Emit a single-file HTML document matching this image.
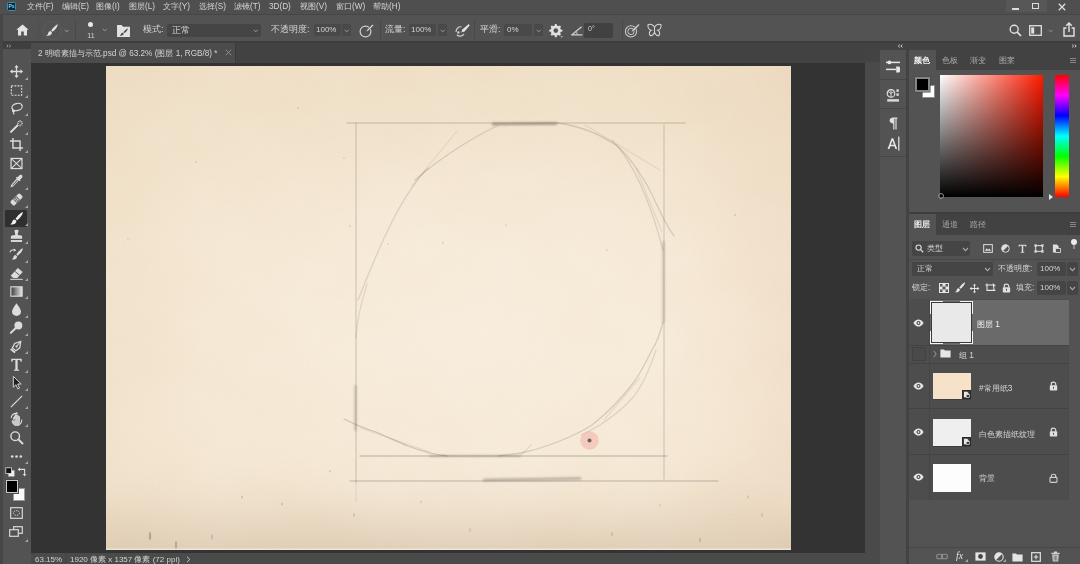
<!DOCTYPE html>
<html lang="zh">
<head>
<meta charset="utf-8">
<title>Photoshop</title>
<style>
*{box-sizing:border-box;margin:0;padding:0}
html,body{width:1080px;height:564px;overflow:hidden;background:#4f4f4f}
body{font-family:"Liberation Sans",sans-serif;font-size:9px;color:#d4d4d4;position:relative;-webkit-font-smoothing:antialiased;filter:blur(.6px)}
.abs{position:absolute}
.m{top:1px;font-size:8.2px}
.tri{position:absolute;width:0;height:0;border-left:3px solid transparent;border-bottom:3px solid #a6a6a6}
.t{position:absolute;white-space:nowrap;overflow:hidden;line-height:12px;height:12px}
#menubar{left:0;top:0;width:1080px;height:14px;background:#4f4f4f}
#optbar{left:0;top:14px;width:1080px;height:29px;background:#535353;border-top:1px solid #464646;border-bottom:2px solid #3d3d3d}
#tabbar{left:31px;top:43px;width:834px;height:20px;background:#424242}
#doctab{left:31px;top:43px;width:205px;height:20px;background:#4c4c4c;border-right:1px solid #3a3a3a}
#surround{left:31px;top:63px;width:834px;height:490px;background:#333333}
#status{left:31px;top:553px;width:834px;height:11px;background:#4a4a4a}
#toolbar{left:0;top:43px;width:31px;height:521px;background:#535353}
#toolhead{left:3px;top:43px;width:28px;height:6px;background:#3f3f3f}
#edge{left:0;top:14px;width:3px;height:550px;background:#464646}
#dock{left:865px;top:43px;width:215px;height:521px;background:#434343}
#vstrip{left:865px;top:62px;width:15px;height:502px;background:#4a4a4a}
#iconcol{left:880px;top:50px;width:26px;height:514px;background:#535353}
.field{position:absolute;background:#454545;border-radius:2px}
.sep{position:absolute;width:1px;background:#484848}
.panel{position:absolute;background:#535353}
.ptabs{position:absolute;background:#424242}
.ptab{position:absolute;background:#535353}
</style>
</head>
<body>
<!-- ===== menu bar ===== -->
<div id="menubar" class="abs">
<div class="abs" style="left:7px;top:2px;width:9px;height:9px;background:#0a2a3c;border:1px solid #3b8fb0;border-radius:1.5px;font-size:5px;line-height:7px;color:#8fd0ee;text-align:center;font-weight:bold;overflow:hidden">Ps</div>
<span class="t m" style="left:27px">文件(F)</span><span class="t m" style="left:62px">编辑(E)</span><span class="t m" style="left:96px">图像(I)</span><span class="t m" style="left:129px">图层(L)</span><span class="t m" style="left:163px">文字(Y)</span><span class="t m" style="left:199px">选择(S)</span><span class="t m" style="left:234px">滤镜(T)</span><span class="t m" style="left:269px">3D(D)</span><span class="t m" style="left:300px">视图(V)</span><span class="t m" style="left:336px">窗口(W)</span><span class="t m" style="left:373px">帮助(H)</span>
<div class="abs" style="left:1006px;top:0;width:41px;height:12px;background:#575757"></div>
<div class="abs" style="left:1012px;top:8px;width:7px;height:1.5px;background:#dcdcdc"></div>
<div class="abs" style="left:1032px;top:3px;width:7px;height:6px;border:1.3px solid #dcdcdc"></div>
<svg class="abs" style="left:1058px;top:3px" width="8" height="8" viewBox="0 0 8 8"><path d="M.8 .8L7.2 7.2M7.2 .8L.8 7.2" stroke="#dcdcdc" stroke-width="1.3"/></svg>
</div>
<!-- ===== options bar ===== -->
<div id="optbar" class="abs">
<!-- home -->
<svg class="abs" style="left:16px;top:9px" width="13" height="12" viewBox="0 0 13 12"><path d="M6.5 .4L.3 5.8H2V11.4H5.2V7.6H7.8V11.4H11V5.8H12.7Z" fill="#e4e4e4"/></svg>
<div class="sep" style="left:38px;top:5px;height:19px;background:#4e4e4e"></div>
<!-- brush tool preset -->
<div class="abs" style="left:42.500px;top:5.500px;width:19px;height:19px;border-radius:50%;border:1px solid #5d5d5d"></div>
<svg class="abs" style="left:45px;top:8px" width="14" height="14" viewBox="0 0 14 14"><path d="M12.6 1.2C11 1.8 7.8 5 6.2 7.4L7.6 8.8C10 7 13 3.4 12.6 1.2Z" fill="#e0e0e0"/><path d="M5.6 8C4.2 8 3.4 9 3.2 10.2C3 11.4 2.2 12 1.2 12.4C3.4 13.2 6.8 12.4 7 9.4Z" fill="#e0e0e0"/></svg>
<svg class="abs arr" style="left:63.8px;top:13.5px" width="5.500" height="4" viewBox="0 0 7 5"><path d="M1 1L3.5 3.6L6 1" stroke="#a8a8a8" stroke-width="1.1" fill="none"/></svg>
<div class="sep" style="left:75px;top:5px;height:19px"></div>
<!-- brush size -->
<div class="abs" style="left:88px;top:7px;width:5px;height:5px;border-radius:50%;background:#e8e8e8"></div>
<span class="t" style="left:85px;top:16px;font-size:7px;line-height:9px;height:9px;width:12px;text-align:center">11</span>
<svg class="abs arr" style="left:101.8px;top:12.5px" width="5.500" height="4" viewBox="0 0 7 5"><path d="M1 1L3.5 3.6L6 1" stroke="#a8a8a8" stroke-width="1.1" fill="none"/></svg>
<!-- brush settings -->
<svg class="abs" style="left:117px;top:9.500px" width="13" height="12" viewBox="0 0 14 13"><path d="M0 0H5L6.5 1.8H14V13H0Z" fill="#e2e2e2"/><path d="M11.6 3.4C10.2 4 8 6.2 6.8 7.8L7.8 8.8C9.6 7.6 12 5 11.6 3.4Z" fill="#4a4a4a"/><path d="M6.2 8.3C5.2 8.3 4.6 9 4.4 9.8C4.2 10.6 3.6 11 2.8 11.3C4.6 11.9 7.2 11.3 7.3 9.2Z" fill="#4a4a4a"/></svg>
<span class="t" style="left:143px;top:8px">模式:</span>
<div class="field" style="left:167px;top:9px;width:94px;height:13px"></div>
<span class="t" style="left:172px;top:8.500px">正常</span>
<svg class="abs arr" style="left:252.8px;top:13.5px" width="5.500" height="4" viewBox="0 0 7 5"><path d="M1 1L3.5 3.6L6 1" stroke="#a8a8a8" stroke-width="1.1" fill="none"/></svg>
<span class="t" style="left:271px;top:8px">不透明度:</span>
<div class="field" style="left:314px;top:9px;width:27px;height:12px;background:#494949"></div>
<span class="t" style="left:316px;top:8.500px;font-size:8px">100%</span>
<div class="field" style="left:342px;top:9px;width:9px;height:12px;background:#494949"></div>
<svg class="abs arr" style="left:343.8px;top:13.5px" width="5.500" height="4" viewBox="0 0 7 5"><path d="M1 1L3.5 3.6L6 1" stroke="#a8a8a8" stroke-width="1.1" fill="none"/></svg>
<!-- pressure opacity -->
<svg class="abs" style="left:359px;top:8px" width="15" height="15" viewBox="0 0 15 15" fill="none"><circle cx="6.5" cy="8.5" r="5.4" stroke="#cfcfcf" stroke-width="1.2"/><path d="M13.6 1.2L8.2 6.6L7 9L9.4 7.8L14.6 2.4Z" fill="#e2e2e2" stroke="#535353" stroke-width=".6"/></svg>
<div class="sep" style="left:380px;top:5px;height:19px"></div>
<span class="t" style="left:385px;top:8px">流量:</span>
<div class="field" style="left:409px;top:9px;width:27px;height:12px;background:#494949"></div>
<span class="t" style="left:411px;top:8.500px;font-size:8px">100%</span>
<div class="field" style="left:438px;top:9px;width:9px;height:12px;background:#494949"></div>
<svg class="abs arr" style="left:439.8px;top:13.5px" width="5.500" height="4" viewBox="0 0 7 5"><path d="M1 1L3.5 3.6L6 1" stroke="#a8a8a8" stroke-width="1.1" fill="none"/></svg>
<!-- airbrush -->
<svg class="abs" style="left:454px;top:8px" width="16" height="15" viewBox="0 0 16 15" fill="none"><path d="M2 9C2 5.6 4.6 3.4 7.4 3.8" stroke="#cfcfcf" stroke-width="1.2"/><path d="M3 11.6C4.2 13.8 8.6 13.8 10 11" stroke="#cfcfcf" stroke-width="1.2"/><path d="M14.8 1L8.6 6.2L7.2 9.6L10.6 8.4L15.6 2.4Z" fill="#e2e2e2"/><circle cx="4.4" cy="9.4" r="1.2" fill="#cfcfcf"/></svg>
<div class="sep" style="left:474px;top:5px;height:19px"></div>
<span class="t" style="left:480px;top:8px">平滑:</span>
<div class="field" style="left:504px;top:9px;width:28px;height:12px;background:#494949"></div>
<span class="t" style="left:507px;top:8.500px;font-size:8px">0%</span>
<div class="field" style="left:534px;top:9px;width:9px;height:12px;background:#494949"></div>
<svg class="abs arr" style="left:535.8px;top:13.5px" width="5.500" height="4" viewBox="0 0 7 5"><path d="M1 1L3.5 3.6L6 1" stroke="#a8a8a8" stroke-width="1.1" fill="none"/></svg>
<!-- gear -->
<svg class="abs" style="left:549px;top:9px" width="14" height="14" viewBox="0 0 14 14"><path d="M6 0H7.6L8 1.6L9.4 2.2L10.8 1.4L12 2.6L11.200 4L11.8 5.400L13.4 5.800V7.400L11.8 7.800L11.2 9.200L12 10.600L10.800 11.800L9.400 11L8 11.600L7.600 13.200H6L5.600 11.600L4.200 11L2.800 11.800L1.600 10.600L2.400 9.200L1.800 7.800L.2 7.400V5.800L1.800 5.400L2.400 4L1.600 2.600L2.800 1.400L4.200 2.200L5.600 1.600Z" fill="#e0e0e0"/><circle cx="6.800" cy="6.600" r="2.300" fill="#535353"/><path d="M11.400 12.200H14L12.700 13.800Z" fill="#bdbdbd"/></svg>
<!-- angle -->
<svg class="abs" style="left:571px;top:11px" width="12" height="10" viewBox="0 0 12 10" fill="none"><path d="M10.600 .8L1 8.800H11.400" stroke="#d0d0d0" stroke-width="1.200"/><path d="M6.200 8.600C6.200 7 5.400 5.800 4.600 5.400" stroke="#d0d0d0" stroke-width="1"/></svg>
<div class="field" style="left:584px;top:8px;width:29px;height:15px;background:#414141"></div>
<span class="t" style="left:588px;top:8px;font-size:7px">0°</span>
<div class="sep" style="left:622px;top:5px;height:19px"></div>
<!-- pressure size -->
<svg class="abs" style="left:624px;top:8px" width="16" height="15" viewBox="0 0 16 15" fill="none"><circle cx="7" cy="8.400" r="5.600" stroke="#c8c8c8" stroke-width="1.100"/><circle cx="7" cy="8.400" r="3.200" stroke="#c8c8c8" stroke-width="1"/><path d="M14.800 .8L8.400 6.600L7 9.400L9.800 8L15.600 2Z" fill="#e2e2e2" stroke="#535353" stroke-width=".6"/></svg>
<!-- butterfly -->
<svg class="abs" style="left:647px;top:8px" width="15" height="15" viewBox="0 0 15 15" fill="none" stroke="#d4d4d4" stroke-width="1.100"><path d="M7.500 4.400C6.400 1.600 2.800 .6 1 1.800C.6 4.200 2 6.600 4.200 7.200C2.400 8 1.800 10.400 3 12.400C4.800 13.200 6.800 11.600 7.500 9.200"/><path d="M7.500 4.400C8.600 1.600 12.200 .6 14 1.800C14.400 4.200 13 6.600 10.800 7.200C12.600 8 13.200 10.400 12 12.400C10.200 13.200 8.200 11.600 7.500 9.200"/><path d="M7.500 3.600V11"/></svg>
<!-- right side icons -->
<svg class="abs" style="left:1009px;top:9px" width="13" height="13" viewBox="0 0 13 13" fill="none"><circle cx="5.200" cy="5.200" r="4" stroke="#e0e0e0" stroke-width="1.400"/><path d="M8.200 8.200L12 12" stroke="#e0e0e0" stroke-width="1.700"/></svg>
<svg class="abs" style="left:1029px;top:10px" width="13" height="11" viewBox="0 0 13 11" fill="none"><rect x=".7" y=".7" width="11.600" height="9.600" stroke="#e0e0e0" stroke-width="1.300"/><rect x="2.200" y="2.400" width="3" height="6.200" fill="#e0e0e0"/></svg>
<svg class="abs arr" style="left:1047.8px;top:13.5px" width="5.500" height="4" viewBox="0 0 7 5"><path d="M1 1L3.5 3.600L6 1" stroke="#9a9a9a" stroke-width="1.100" fill="none"/></svg>
<svg class="abs" style="left:1063px;top:7px" width="12" height="15" viewBox="0 0 12 15" fill="none" stroke="#e4e4e4" stroke-width="1.400"><path d="M3.400 6H1V14H11V6H8.600"/><path d="M6 10V1.400M3.200 3.800L6 1L8.800 3.800"/></svg>
</div>
<!-- ===== document tab bar ===== -->
<div id="tabbar" class="abs"></div>
<div id="doctab" class="abs">
<span class="t" style="left:7px;top:4.500px;font-size:8.200px">2 明暗素描与示范.psd @ 63.2% (图层 1, RGB/8) *</span>
<svg class="abs" style="left:194px;top:6px" width="7" height="7" viewBox="0 0 7 7"><path d="M.8 .8L6.200 6.200M6.200 .8L.8 6.200" stroke="#8c8c8c" stroke-width="1"/></svg>
</div>
<!-- ===== canvas ===== -->
<div id="surround" class="abs"></div>
<div id="doc" class="abs" style="left:106px;top:66px;width:685px;height:484px;background:#f5e8d4;overflow:hidden">
<div class="abs" style="left:0;top:0;width:685px;height:484px;background:
radial-gradient(ellipse 48% 46% at 56% 55%, rgba(250,240,226,.75) 0, rgba(250,240,226,.35) 60%, rgba(250,240,226,0) 100%),
linear-gradient(to bottom, rgba(230,210,180,.34) 0, rgba(230,210,180,.26) 10%, rgba(230,210,180,.10) 24%, rgba(230,210,180,0) 38%),
linear-gradient(to top, rgba(240,230,212,.9) 0, rgba(240,230,212,.9) 1px, rgba(206,186,160,.50) 2px, rgba(212,192,166,.38) 5%, rgba(218,198,174,.22) 10%, rgba(222,204,182,.08) 15%, rgba(222,204,182,0) 20%),
linear-gradient(to right, rgba(232,212,184,.22) 0, rgba(232,212,184,0) 14%),
linear-gradient(to left, rgba(234,208,184,.34) 0, rgba(234,208,184,.14) 10%, rgba(234,208,184,0) 20%)"></div>
<svg class="abs" style="left:0;top:0;mix-blend-mode:multiply;opacity:.32" width="685" height="484"><defs>
<filter id="pn" x="0" y="0" width="100%" height="100%"><feTurbulence type="fractalNoise" baseFrequency="0.012 0.016" numOctaves="3" seed="7" result="n"/><feColorMatrix type="matrix" values="0 0 0 0 .93  0 0 0 0 .87  0 0 0 0 .78  .9 0 0 0 -.28"/></filter>
<filter id="pg" x="0" y="0" width="100%" height="100%"><feTurbulence type="fractalNoise" baseFrequency="0.55" numOctaves="2" seed="3"/><feColorMatrix type="matrix" values="0 0 0 0 .55  0 0 0 0 .5  0 0 0 0 .42  1.6 0 0 0 -.78"/></filter>
</defs><rect width="685" height="484" filter="url(#pn)"/><rect width="685" height="484" filter="url(#pg)" opacity=".22"/></svg>
<svg class="abs" style="left:0;top:0" width="685" height="484" viewBox="106 66 685 484" fill="none" stroke-linecap="round">
<defs>
<filter id="bl" x="-5%" y="-5%" width="110%" height="110%"><feGaussianBlur stdDeviation="0.6"/></filter>
<filter id="bl3" x="-5%" y="-5%" width="110%" height="110%"><feGaussianBlur stdDeviation="0.700"/></filter>
<filter id="bl2" x="-10%" y="-200%" width="120%" height="500%"><feGaussianBlur stdDeviation="0.9"/></filter>
</defs>
<g filter="url(#bl)" stroke="#6e675c">
<!-- frame lines -->
<path d="M347 123 L685 123" stroke-opacity=".24" stroke-width="1.300"/>
<path d="M356 123 L356 482" stroke-opacity=".26" stroke-width="1.300"/><path d="M356 482 L356 502" stroke-opacity=".12" stroke-width="1.300"/>
<path d="M664 125 L664 479" stroke-opacity=".24" stroke-width="1.300"/>
<path d="M360 456 L667 456" stroke-opacity=".30" stroke-width="1.400"/>
<path d="M350 481 L718 481" stroke-opacity=".28" stroke-width="1.400"/>
</g>
<g filter="url(#bl3)" stroke="#6e675c">
<!-- circle chords -->
<path d="M497 126 C475 136 440 158 415 180" stroke-opacity=".22" stroke-width="1.300"/>
<path d="M428 168 C400 196 378 250 358 300" stroke-opacity=".20" stroke-width="1.300"/>
<path d="M457 131 L412 186" stroke-opacity=".10" stroke-width="1.200"/>
<path d="M367 284 C361 303 357 320 356 338" stroke-opacity=".18" stroke-width="1.200"/>
<path d="M557 123 C580 126 600 134 617 146 C630 157 646 180 656 203 C662 216 668 228 674 236" stroke-opacity=".24" stroke-width="1.300"/>
<path d="M585 125 L660 170" stroke-opacity=".13" stroke-width="1.200"/>
<path d="M612 140 C632 160 650 200 663 250" stroke-opacity=".20" stroke-width="1.300"/>
<path d="M636 168 L662 232" stroke-opacity=".13" stroke-width="1.200"/>
<path d="M663 322 C660 334 656 344 652 350 C646 362 640 374 634 382 C622 398 606 414 592 425 C575 436 545 448 521 453 L498 456" stroke-opacity=".24" stroke-width="1.300"/>
<path d="M656 350 C650 368 642 386 634 396 C626 406 606 424 581 435" stroke-opacity=".17" stroke-width="1.300"/>
<path d="M640 378 L604 420" stroke-opacity=".12" stroke-width="1.200"/>
<path d="M344 419 C356 425 366 429 376 432 C390 438 400 443 408 446 C424 452 436 455 447 456" stroke-opacity=".30" stroke-width="1.300"/>
<path d="M360 428 L430 452" stroke-opacity=".14" stroke-width="1.200"/>
<path d="M521 455 L531 445" stroke-opacity=".14" stroke-width="1.200"/>
</g>
<g filter="url(#bl2)" stroke="#5d574e">
<!-- dark smudges -->
<path d="M493 124 L556 123.500" stroke-opacity=".58" stroke-width="2.400"/>
<path d="M663.500 242 L663.500 322" stroke-opacity=".34" stroke-width="1.800"/>
<path d="M355.500 386 L355.500 430" stroke-opacity=".40" stroke-width="1.800"/>
<path d="M430 456 L520 456" stroke-opacity=".30" stroke-width="1.800"/>
<path d="M484 480 L580 478.500" stroke-opacity=".42" stroke-width="2.400"/>
</g>
<g filter="url(#bl)"><ellipse cx="150" cy="536" rx="1.2" ry="4" fill="#5a5040" fill-opacity="0.35"/><ellipse cx="176" cy="545" rx="1.1" ry="4" fill="#5a5040" fill-opacity="0.3"/><ellipse cx="242" cy="497" rx="1" ry="1.5" fill="#5a5040" fill-opacity="0.22"/><ellipse cx="282" cy="504" rx="1" ry="1.5" fill="#5a5040" fill-opacity="0.2"/><ellipse cx="212" cy="537" rx="1" ry="3" fill="#5a5040" fill-opacity="0.2"/><ellipse cx="354" cy="515" rx="1" ry="2" fill="#5a5040" fill-opacity="0.18"/><ellipse cx="330" cy="471" rx="1" ry="1" fill="#5a5040" fill-opacity="0.2"/><ellipse cx="421" cy="502" rx="0.9" ry="1.5" fill="#5a5040" fill-opacity="0.16"/><ellipse cx="612" cy="534" rx="1" ry="2" fill="#5a5040" fill-opacity="0.2"/><ellipse cx="700" cy="540" rx="1" ry="2.5" fill="#5a5040" fill-opacity="0.22"/><ellipse cx="748" cy="497" rx="1" ry="1.5" fill="#5a5040" fill-opacity="0.18"/><ellipse cx="735" cy="215" rx="1" ry="1" fill="#5a5040" fill-opacity="0.2"/><ellipse cx="298" cy="108" rx="1" ry="1" fill="#5a5040" fill-opacity="0.16"/><ellipse cx="196" cy="162" rx="1" ry="1" fill="#5a5040" fill-opacity="0.14"/><ellipse cx="128" cy="239" rx="0.9" ry="0.9" fill="#5a5040" fill-opacity="0.14"/><ellipse cx="443" cy="243" rx="1" ry="1.2" fill="#5a5040" fill-opacity="0.14"/><ellipse cx="607" cy="250" rx="1" ry="1" fill="#5a5040" fill-opacity="0.14"/><ellipse cx="506" cy="225" rx="1" ry="1" fill="#5a5040" fill-opacity="0.12"/><ellipse cx="350" cy="226" rx="0.9" ry="0.9" fill="#5a5040" fill-opacity="0.16"/><ellipse cx="344" cy="158" rx="0.9" ry="0.9" fill="#5a5040" fill-opacity="0.14"/><ellipse cx="388" cy="244" rx="0.9" ry="0.9" fill="#5a5040" fill-opacity="0.14"/><ellipse cx="762" cy="515" rx="1" ry="2" fill="#5a5040" fill-opacity="0.16"/><ellipse cx="470" cy="530" rx="1" ry="2" fill="#5a5040" fill-opacity="0.15"/><ellipse cx="660" cy="505" rx="0.9" ry="1.5" fill="#5a5040" fill-opacity="0.14"/></g>
<!-- brush cursor -->
<circle cx="589.5" cy="440.5" r="9.300" fill="#f0aaa0" fill-opacity=".48"/>
<circle cx="589.5" cy="440.5" r="2" fill="#5e4a46" fill-opacity=".85"/>
</svg>
</div>
<div id="status" class="abs">
<span class="t" style="left:4px;top:.5px;font-size:8px">63.15%</span>
<div class="sep" style="left:34px;top:1px;height:10px;background:#444"></div>
<span class="t" style="left:39px;top:.5px;font-size:8px">1920 像素 x 1357 像素 (72 ppi)</span>
<svg class="abs" style="left:155px;top:3px" width="5" height="7" viewBox="0 0 5 7"><path d="M1 .8L3.800 3.500L1 6.200" stroke="#c8c8c8" stroke-width="1" fill="none"/></svg>
</div>
<!-- ===== left toolbar ===== -->
<div id="toolbar" class="abs"></div>
<div id="toolhead" class="abs"></div>
<svg class="abs" style="left:6px;top:44px" width="6.500" height="4" viewBox="0 0 8 5"><path d="M.8 .8L2.600 2.500L.8 4.200M4 .8L5.800 2.500L4 4.200" stroke="#bdbdbd" stroke-width=".9" fill="none"/></svg>
<div id="edge" class="abs"></div>
<div class="abs" style="left:5px;top:210px;width:22px;height:17px;background:#2f2f2f;border-radius:1px"></div>
<svg class="abs" style="left:9px;top:64.2px" width="15" height="15" viewBox="0 0 16 16"><path d="M8 1L5.600 3.800H7.300V7.300H3.800V5.600L1 8L3.800 10.400V8.700H7.300V12.200H5.600L8 15L10.400 12.200H8.700V8.700H12.200V10.400L15 8L12.200 5.600V7.300H8.700V3.800H10.400Z" fill="#dcdcdc"/></svg>
<div class="tri" style="left:25px;top:76.7px"></div>
<svg class="abs" style="left:9px;top:82.5px" width="15" height="15" viewBox="0 0 16 16"><rect x="2.500" y="3" width="11" height="10" fill="none" stroke="#dcdcdc" stroke-width="1.200" stroke-dasharray="2 1.300"/></svg>
<div class="tri" style="left:25px;top:95.0px"></div>
<svg class="abs" style="left:9px;top:100.8px" width="15" height="15" viewBox="0 0 16 16"><ellipse cx="8.600" cy="6.400" rx="5.600" ry="3.800" fill="none" stroke="#dcdcdc" stroke-width="1.300" transform="rotate(-14 8.600 6.400)"/><path d="M4.400 9.200C3 10.400 4 12 5.400 11.600C6.600 11.200 6 9.600 5 10.200C4.400 11.600 4.600 13.200 5.600 14.400" fill="none" stroke="#dcdcdc" stroke-width="1.100"/></svg>
<div class="tri" style="left:25px;top:113.3px"></div>
<svg class="abs" style="left:9px;top:119.1px" width="15" height="15" viewBox="0 0 16 16"><path d="M2.200 14.600L1.200 13.600L9 5.800L10 6.800Z" fill="#dcdcdc" stroke="#dcdcdc" stroke-width=".9"/><path d="M11.800 1V3.400M11.800 5.800V8M8.600 4.500H10.600M13 4.500H15M9.600 2.200L10.800 3.400M14 2.200L12.800 3.400M14 6.800L12.800 5.600" stroke="#dcdcdc" stroke-width="1"/></svg>
<div class="tri" style="left:25px;top:131.6px"></div>
<svg class="abs" style="left:9px;top:137.4px" width="15" height="15" viewBox="0 0 16 16"><path d="M4.200 1V11.800H15M1 4.200H11.800V15" fill="none" stroke="#dcdcdc" stroke-width="1.500"/></svg>
<div class="tri" style="left:25px;top:149.9px"></div>
<svg class="abs" style="left:9px;top:155.7px" width="15" height="15" viewBox="0 0 16 16"><rect x="2.200" y="2.600" width="11.600" height="10.800" fill="none" stroke="#dcdcdc" stroke-width="1.300"/><path d="M2.200 2.600L13.800 13.400M13.800 2.600L2.200 13.400" stroke="#dcdcdc" stroke-width="1.100"/></svg>
<svg class="abs" style="left:9px;top:174.0px" width="15" height="15" viewBox="0 0 16 16"><path d="M13.800 1.200C12.800 .4 11.400 .8 10.600 1.800L9.200 3.400L8.400 2.800L7.400 4L8.200 4.800L2.400 11.400L1.600 14.200L4.400 13.400L10.400 7L11.200 7.800L12.400 6.600L11.800 6L13.400 4.400C14.400 3.600 14.800 2.200 13.800 1.200ZM3.600 11.800L8.800 6L9.400 6.600L4 12.400Z" fill="#dcdcdc"/></svg>
<div class="tri" style="left:25px;top:186.5px"></div>
<svg class="abs" style="left:9px;top:192.3px" width="15" height="15" viewBox="0 0 16 16"><g transform="rotate(-45 8 8)"><rect x="1" y="5" width="14" height="6" rx="1.600" fill="#dcdcdc"/><rect x="5.400" y="5" width="5.200" height="6" fill="#7c7c7c"/><circle cx="7" cy="7" r=".6" fill="#dcdcdc"/><circle cx="9" cy="7" r=".6" fill="#dcdcdc"/><circle cx="7" cy="9" r=".6" fill="#dcdcdc"/><circle cx="9" cy="9" r=".6" fill="#dcdcdc"/></g></svg>
<div class="tri" style="left:25px;top:204.8px"></div>
<svg class="abs" style="left:9px;top:210.6px" width="15" height="15" viewBox="0 0 16 16"><path d="M14.600 1C12.600 1.600 8.800 5.400 7 8.200L8.600 9.800C11.400 7.800 15 3.600 14.600 1Z" fill="#f0f0f0"/><path d="M6.200 9C4.600 9 3.700 10.200 3.500 11.500C3.300 12.800 2.400 13.500 1.200 14C3.800 14.900 7.700 14 8 10.600Z" fill="#f0f0f0"/></svg>
<div class="tri" style="left:25px;top:223.1px"></div>
<svg class="abs" style="left:9px;top:228.9px" width="15" height="15" viewBox="0 0 16 16"><path d="M5.800 1.600C5.800 .4 10.200 .4 10.200 1.600C10.200 3.400 9.200 4.400 9.400 6.400L13 7C13.800 7.200 14 7.800 14 8.600V10.400H2V8.600C2 7.800 2.200 7.200 3 7L6.600 6.400C6.800 4.400 5.800 3.400 5.800 1.600Z" fill="#dcdcdc"/><rect x="2" y="11.800" width="12" height="2" fill="#dcdcdc"/></svg>
<div class="tri" style="left:25px;top:241.4px"></div>
<svg class="abs" style="left:9px;top:247.2px" width="15" height="15" viewBox="0 0 16 16"><path d="M14.600 1.400C12.800 2 9.400 5.400 7.800 7.900L9.200 9.300C11.700 7.500 15 3.800 14.600 1.400Z" fill="#dcdcdc"/><path d="M7.100 8.600C5.700 8.600 4.900 9.700 4.700 10.800C4.500 12 3.700 12.600 2.600 13.100C4.900 13.900 8.400 13.100 8.700 10Z" fill="#dcdcdc"/><path d="M1 5.600C1.600 3.400 4.600 2.200 6.800 3.600" fill="none" stroke="#dcdcdc" stroke-width="1.100"/><path d="M5.600 1.600L7.600 3.800L4.800 4.800Z" fill="#dcdcdc"/></svg>
<div class="tri" style="left:25px;top:259.7px"></div>
<svg class="abs" style="left:9px;top:265.5px" width="15" height="15" viewBox="0 0 16 16"><path d="M9.400 2L14.600 6.400L8.800 12.800H4.600L1.800 10.400Z" fill="#dcdcdc"/><path d="M6.200 5.600L11.400 10" stroke="#535353" stroke-width="1"/><path d="M1.400 14.200H14.600" stroke="#dcdcdc" stroke-width="1.100"/></svg>
<div class="tri" style="left:25px;top:278.0px"></div>
<svg class="abs" style="left:9px;top:283.8px" width="15" height="15" viewBox="0 0 16 16"><defs><linearGradient id="tg" x1="0" x2="1"><stop offset="0" stop-color="#3a3a3a"/><stop offset="1" stop-color="#e8e8e8"/></linearGradient></defs><rect x="2" y="3" width="12" height="10" fill="url(#tg)" stroke="#dcdcdc" stroke-width="1.200"/></svg>
<div class="tri" style="left:25px;top:296.3px"></div>
<svg class="abs" style="left:9px;top:302.1px" width="15" height="15" viewBox="0 0 16 16"><path d="M8 1.200C8 1.200 3.200 7.200 3.200 10.400C3.200 13 5.400 14.800 8 14.800C10.600 14.800 12.800 13 12.800 10.400C12.800 7.200 8 1.200 8 1.200Z" fill="#dcdcdc"/></svg>
<div class="tri" style="left:25px;top:314.6px"></div>
<svg class="abs" style="left:9px;top:320.4px" width="15" height="15" viewBox="0 0 16 16"><circle cx="10" cy="5.800" r="4.200" fill="#dcdcdc"/><path d="M7 8.800L2 13.600" stroke="#dcdcdc" stroke-width="2" stroke-linecap="round"/></svg>
<div class="tri" style="left:25px;top:332.9px"></div>
<svg class="abs" style="left:9px;top:338.7px" width="15" height="15" viewBox="0 0 16 16"><g transform="rotate(40 8 8)"><path d="M8 1L11.600 6.800L10.400 12H5.600L4.400 6.800Z" fill="none" stroke="#dcdcdc" stroke-width="1.300"/><path d="M8 1.600V7" stroke="#dcdcdc" stroke-width="1"/><circle cx="8" cy="8" r="1.200" fill="#dcdcdc"/><rect x="5" y="13" width="6" height="2" fill="#dcdcdc"/></g></svg>
<div class="tri" style="left:25px;top:351.2px"></div>
<svg class="abs" style="left:9px;top:357.0px" width="15" height="15" viewBox="0 0 16 16"><path d="M2.400 1.800H13.600V5H12.400C12.200 3.800 11.800 3.300 10.600 3.300H9.200V12.400C9.200 13.200 9.600 13.400 10.800 13.500V14.600H5.200V13.500C6.400 13.400 6.800 13.200 6.800 12.400V3.300H5.400C4.200 3.300 3.800 3.800 3.600 5H2.400Z" fill="#dcdcdc"/></svg>
<div class="tri" style="left:25px;top:369.5px"></div>
<svg class="abs" style="left:9px;top:375.3px" width="15" height="15" viewBox="0 0 16 16"><path d="M4.600 1.400V13L7.400 10.400L9.400 14.800L11.200 14L9.200 9.600H13Z" fill="#1e1e1e" stroke="#dcdcdc" stroke-width="1"/></svg>
<div class="tri" style="left:25px;top:387.8px"></div>
<svg class="abs" style="left:9px;top:393.6px" width="15" height="15" viewBox="0 0 16 16"><path d="M2 14L14 2" stroke="#dcdcdc" stroke-width="1.400"/></svg>
<div class="tri" style="left:25px;top:406.1px"></div>
<svg class="abs" style="left:9px;top:411.9px" width="15" height="15" viewBox="0 0 16 16"><path d="M4.600 8.200C4.600 6 5.400 4.600 6.400 4.600V8M6.400 7V3.400C6.400 2.400 8 2.400 8 3.400V7.600M8 4C8 3 9.600 3 9.600 4V7.800M9.600 5.200C9.600 4.200 11.200 4.200 11.200 5.200V10.400C11.200 12.800 9.800 14.400 7.600 14.400C5.400 14.400 4 12.600 3.400 10.400C3 9 4.400 8.400 5 9.600" fill="#dcdcdc" fill-opacity=".85" stroke="#dcdcdc" stroke-width=".9"/><path d="M2.200 6.600C2.600 3.400 5.200 1.400 8.400 1.200" fill="none" stroke="#dcdcdc" stroke-width="1.100"/><path d="M7.600 0L9.800 1.200L7.800 2.600Z" fill="#dcdcdc"/><path d="M13.600 8C13.600 11.200 11.800 13.600 9.200 14.600" fill="none" stroke="#dcdcdc" stroke-width="1.100"/></svg>
<div class="tri" style="left:25px;top:424.4px"></div>
<svg class="abs" style="left:9px;top:430.2px" width="15" height="15" viewBox="0 0 16 16"><circle cx="6.600" cy="6.600" r="4.600" fill="none" stroke="#dcdcdc" stroke-width="1.500"/><path d="M10 10L14.400 14.400" stroke="#dcdcdc" stroke-width="2" stroke-linecap="round"/></svg>
<svg class="abs" style="left:9px;top:448.5px" width="15" height="15" viewBox="0 0 16 16"><circle cx="3.400" cy="8" r="1.400" fill="#dcdcdc"/><circle cx="8" cy="8" r="1.400" fill="#dcdcdc"/><circle cx="12.600" cy="8" r="1.400" fill="#dcdcdc"/></svg>
<div class="tri" style="left:25px;top:461.0px"></div>
<svg class="abs" style="left:5px;top:467px" width="10" height="10" viewBox="0 0 10 10"><rect x="3.600" y="3.600" width="5.600" height="5.600" fill="#f2f2f2" stroke="#bbb" stroke-width=".6"/><rect x=".8" y=".8" width="5.600" height="5.600" fill="#111" stroke="#ddd" stroke-width=".8"/></svg>
<svg class="abs" style="left:17px;top:467px" width="10" height="10" viewBox="0 0 10 10" fill="none"><path d="M2.400 2.400H7.600V7.600" stroke="#dcdcdc" stroke-width="1.100"/><path d="M.6 2.400L3 .6V4.200ZM7.600 9.400L5.800 7H9.400Z" fill="#dcdcdc"/></svg>
<div class="abs" style="left:12.500px;top:487.500px;width:12px;height:13px;background:#fafafa;border:1px solid #9a9a9a"></div>
<div class="abs" style="left:5.500px;top:480px;width:12.500px;height:13px;background:#000;border:1px solid #c9c9c9;box-shadow:0 0 0 1px #4a4a4a"></div>
<svg class="abs" style="left:10px;top:507px" width="13" height="12" viewBox="0 0 13 12" fill="none"><rect x=".7" y=".7" width="11.600" height="10.600" stroke="#d8d8d8" stroke-width="1.200"/><ellipse cx="6.500" cy="6" rx="3" ry="2.400" stroke="#d8d8d8" stroke-width="1" stroke-dasharray="1.400 1"/></svg>
<svg class="abs" style="left:9px;top:526px" width="14" height="12" viewBox="0 0 14 12" fill="none"><rect x="4.700" y=".7" width="8.600" height="6.600" stroke="#d8d8d8" stroke-width="1.200"/><rect x=".7" y="3.700" width="8.600" height="6.600" fill="#535353" stroke="#d8d8d8" stroke-width="1.200"/></svg>
<div class="tri" style="left:25px;top:539px"></div>
<!-- ===== right dock ===== -->
<div id="dock" class="abs"></div>
<div id="vstrip" class="abs"></div>
<div id="iconcol" class="abs"></div>
<svg class="abs" style="left:897px;top:44px" width="6.500" height="4" viewBox="0 0 8 5"><path d="M3.400 .8L1.600 2.500L3.400 4.200M6.600 .8L4.800 2.500L6.600 4.200" stroke="#d8d8d8" stroke-width="1.200" fill="none"/></svg>
<svg class="abs" style="left:1071px;top:44px" width="6.500" height="4" viewBox="0 0 8 5"><path d="M1.400 .8L3.200 2.500L1.400 4.200M4.600 .8L6.400 2.500L4.600 4.200" stroke="#d8d8d8" stroke-width="1.200" fill="none"/></svg>
<!-- collapsed icons -->
<div class="abs" style="left:880px;top:79px;width:26px;height:1px;background:#464646"></div>
<div class="abs" style="left:880px;top:108px;width:26px;height:1px;background:#464646"></div>
<div class="abs" style="left:880px;top:156px;width:26px;height:1px;background:#464646"></div>
<svg class="abs" style="left:885px;top:59px" width="16" height="15" viewBox="0 0 16 15" fill="none" stroke="#e6e6e6"><path d="M1 3.400H15" stroke-width="1.500"/><circle cx="4.400" cy="3.400" r="1.900" fill="#e6e6e6" stroke="none"/><path d="M1 10.400H11" stroke-width="1.500"/><path d="M11.200 7.400H13.600C14.600 7.400 15 8.200 15 9V12C15 13 14.400 13.600 13.600 13.600H11.200Z" fill="#e6e6e6" stroke="none"/></svg>
<svg class="abs" style="left:886px;top:88px" width="16" height="15" viewBox="0 0 16 15" fill="none"><circle cx="5" cy="5.400" r="3.800" stroke="#dcdcdc" stroke-width="1.200"/><path d="M5 1.600V9.200M2 3.600L5 5.400L8 3.600" stroke="#dcdcdc" stroke-width=".9"/><rect x="10.400" y="1.400" width="2.400" height="2.400" fill="#dcdcdc"/><rect x="10.400" y="5.400" width="2.400" height="2.400" fill="#dcdcdc"/><rect x="1.200" y="11.200" width="11.800" height="2.400" fill="#dcdcdc"/></svg>
<svg class="abs" style="left:889px;top:117px" width="9" height="13" viewBox="0 0 9 13"><path d="M4.400 .6H8.400V1.800H7.600V12.400H6.400V1.800H5.400V12.400H4.200V6.600C2 6.600 .6 5.200 .6 3.600C.6 1.800 2.200 .6 4.400 .6Z" fill="#dedede"/></svg>
<svg class="abs" style="left:887px;top:136px" width="13" height="15" viewBox="0 0 13 15"><path d="M4.600 2.200L.6 13H2.400L3.400 10.200H7.400L8.400 13H10.200L6.200 2.200ZM3.900 8.800L5.400 4.400L6.900 8.800Z" fill="#e8e8e8"/><rect x="11.200" y=".6" width="1.200" height="14" fill="#e8e8e8"/></svg>
<!-- ===== color panel ===== -->
<div class="ptabs" style="left:909px;top:50px;width:171px;height:20px"></div>
<div class="panel" style="left:909px;top:70px;width:171px;height:142px"></div>
<div class="ptab" style="left:909px;top:50px;width:27px;height:21px"></div>
<span class="t" style="left:914px;top:55px;font-size:8px;color:#f0f0f0;font-weight:bold">颜色</span>
<span class="t" style="left:942px;top:55px;font-size:8px;color:#a9a9a9">色板</span>
<span class="t" style="left:970px;top:55px;font-size:8px;color:#a9a9a9">渐变</span>
<span class="t" style="left:999px;top:55px;font-size:8px;color:#a9a9a9">图案</span>
<div class="abs" style="left:1070px;top:58px;width:6px;height:5px;border-top:1px solid #868686;border-bottom:1px solid #868686"><div style="height:1px;margin-top:1px;background:#868686"></div></div>
<div class="abs" style="left:922px;top:85px;width:13px;height:13px;background:#fff;border:1px solid #8c8c8c"></div>
<div class="abs" style="left:914.500px;top:77px;width:15px;height:15px;background:#000;border:2px solid #858585;box-shadow:0 0 0 .5px #444"></div>
<div class="abs" style="left:940px;top:75px;width:103px;height:122px;background:linear-gradient(to top,#000 0,rgba(0,0,0,0) 100%),linear-gradient(to right,#fff 0,#ff1a00 100%)"></div>
<div class="abs" style="left:938px;top:193px;width:6px;height:6px;border-radius:50%;border:1px solid #8c8c8c"></div>
<div class="abs" style="left:1055px;top:75px;width:13.500px;height:122px;background:linear-gradient(to bottom,#ff0000 0,#ff00ff 16.600%,#0000ff 33.300%,#00ffff 50%,#00ff00 66.600%,#ffff00 83.300%,#ff0000 100%)"></div>
<div class="abs" style="left:1049px;top:194px;width:0;height:0;border-top:3px solid transparent;border-bottom:3px solid transparent;border-left:4.500px solid #e4e4e4"></div>
<!-- ===== layers panel ===== -->
<div class="abs" style="left:909px;top:212px;width:171px;height:2px;background:#3e3e3e"></div>
<div class="ptabs" style="left:909px;top:214px;width:171px;height:21px"></div>
<div class="panel" style="left:909px;top:235px;width:171px;height:329px"></div>
<div class="ptab" style="left:909px;top:214px;width:27px;height:22px"></div>
<span class="t" style="left:914px;top:219px;font-size:8px;color:#f0f0f0;font-weight:bold">图层</span>
<span class="t" style="left:942px;top:219px;font-size:8px;color:#a9a9a9">通道</span>
<span class="t" style="left:970px;top:219px;font-size:8px;color:#a9a9a9">路径</span>
<div class="abs" style="left:1070px;top:222px;width:6px;height:5px;border-top:1px solid #868686;border-bottom:1px solid #868686"><div style="height:1px;margin-top:1px;background:#868686"></div></div>
<!-- filter row -->
<div class="field" style="left:912px;top:241px;width:58px;height:15px"></div>
<svg class="abs" style="left:915px;top:244px" width="9" height="9" viewBox="0 0 9 9" fill="none"><circle cx="3.600" cy="3.600" r="2.600" stroke="#dcdcdc" stroke-width="1.100"/><path d="M5.600 5.600L8.200 8.200" stroke="#dcdcdc" stroke-width="1.300"/></svg>
<span class="t" style="left:927px;top:243px;font-size:8px">类型</span>
<svg class="abs" style="left:962px;top:247px" width="7" height="5" viewBox="0 0 7 5"><path d="M1 1L3.500 3.600L6 1" stroke="#a8a8a8" stroke-width="1.100" fill="none"/></svg>
<svg class="abs" style="left:983px;top:243.500px" width="10" height="9" viewBox="0 0 11 10" fill="none"><rect x=".7" y=".7" width="9.600" height="8.600" stroke="#dedede" stroke-width="1.100"/><path d="M2 7.600L4 4.800L5.600 6.400L7 5L9 7.600Z" fill="#dedede"/></svg>
<svg class="abs" style="left:1000.500px;top:243.500px" width="9" height="9" viewBox="0 0 10 10"><circle cx="5" cy="5" r="4.200" fill="none" stroke="#dedede" stroke-width="1.100"/><path d="M2 8A4.200 4.200 0 0 1 8 2Z" fill="#dedede"/></svg>
<svg class="abs" style="left:1017.500px;top:243.500px" width="9" height="9" viewBox="0 0 10 10"><path d="M.8 .8H9.200V3H8.400C8.200 2.200 8 2 7.200 2H5.800V8C5.800 8.600 6 8.800 7 8.800V9.600H3V8.800C4 8.800 4.200 8.600 4.200 8V2H2.800C2 2 1.800 2.200 1.600 3H.8Z" fill="#dedede"/></svg>
<svg class="abs" style="left:1033.500px;top:243.500px" width="10" height="9" viewBox="0 0 11 10" fill="none"><rect x="1.800" y="1.800" width="7.400" height="6.400" stroke="#dedede" stroke-width="1.100"/><rect x=".4" y=".4" width="2.600" height="2.600" fill="#dedede"/><rect x="8" y=".4" width="2.600" height="2.600" fill="#dedede"/><rect x=".4" y="7" width="2.600" height="2.600" fill="#dedede"/><rect x="8" y="7" width="2.600" height="2.600" fill="#dedede"/></svg>
<svg class="abs" style="left:1051.500px;top:243.500px" width="9" height="9" viewBox="0 0 10 10"><path d="M1 .6H5.400L7.400 2.600V9.400H1Z" fill="#dedede"/><rect x="4" y="5" width="5.400" height="4.400" fill="#535353" stroke="#dedede" stroke-width=".9"/></svg>
<div class="abs" style="left:1071px;top:239px;width:6px;height:6px;border-radius:50%;background:#ececec"></div>
<div class="abs" style="left:1073px;top:245px;width:2px;height:4px;background:#8a8a8a"></div>
<!-- blend / opacity row -->
<div class="abs" style="left:909px;top:259px;width:171px;height:1px;background:#484848"></div>
<div class="field" style="left:912px;top:262px;width:81px;height:14px"></div>
<span class="t" style="left:917px;top:263px;font-size:8px">正常</span>
<svg class="abs" style="left:984px;top:267px" width="7" height="5" viewBox="0 0 7 5"><path d="M1 1L3.500 3.600L6 1" stroke="#a8a8a8" stroke-width="1.100" fill="none"/></svg>
<span class="t" style="left:998px;top:263px;font-size:8.200px">不透明度:</span>
<div class="field" style="left:1037px;top:262px;width:29px;height:14px"></div>
<span class="t" style="left:1040px;top:263px;font-size:8px">100%</span>
<div class="field" style="left:1067px;top:262px;width:11px;height:14px"></div>
<svg class="abs" style="left:1069px;top:267px" width="7" height="5" viewBox="0 0 7 5"><path d="M1 1L3.500 3.600L6 1" stroke="#a8a8a8" stroke-width="1.100" fill="none"/></svg>
<!-- lock row -->
<span class="t" style="left:912px;top:282px;font-size:8.200px">锁定:</span>
<svg class="abs" style="left:939px;top:283px" width="10" height="10" viewBox="0 0 10 10"><rect x=".5" y=".5" width="9" height="9" fill="#e6e6e6"/><path d="M.5 .5H3.500V3.500H.5ZM6.500 .5H9.500V3.500H6.500ZM3.500 3.500H6.500V6.500H3.500ZM.5 6.500H3.500V9.500H.5ZM6.500 6.500H9.500V9.500H6.500Z" fill="#5a5a5a"/><rect x=".5" y=".5" width="9" height="9" fill="none" stroke="#e6e6e6" stroke-width="1"/></svg>
<svg class="abs" style="left:954px;top:281px" width="12" height="13" viewBox="0 0 16 16"><path d="M14.600 1C12.600 1.600 8.800 5.400 7 8.200L8.600 9.800C11.400 7.800 15 3.600 14.600 1Z" fill="#e6e6e6"/><path d="M6.200 9C4.600 9 3.700 10.200 3.500 11.500C3.300 12.800 2.400 13.500 1.200 14C3.800 14.900 7.700 14 8 10.600Z" fill="#e6e6e6"/></svg>
<svg class="abs" style="left:969px;top:283px" width="11" height="11" viewBox="0 0 16 16"><path d="M8 1L5.600 3.800H7.300V7.300H3.800V5.600L1 8L3.800 10.400V8.700H7.300V12.200H5.600L8 15L10.400 12.200H8.700V8.700H12.200V10.400L15 8L12.200 5.600V7.300H8.700V3.800H10.400Z" fill="#e6e6e6"/></svg>
<svg class="abs" style="left:985px;top:283px" width="11" height="10" viewBox="0 0 11 10" fill="none"><path d="M2 .6V7.400H10.400" stroke="#e6e6e6" stroke-width="1.100"/><path d="M.4 2H8.400L9 7.200" stroke="#e6e6e6" stroke-width="1.100"/><path d="M7.800 .6L10.400 3.200" stroke="#e6e6e6" stroke-width="1.100"/></svg>
<svg class="abs" style="left:1002px;top:283px" width="9" height="10" viewBox="0 0 9 10"><path d="M2.300 4.400V3C2.300 .6 6.700 .6 6.700 3V4.400" fill="none" stroke="#e0e0e0" stroke-width="1.200"/><rect x=".8" y="4.200" width="7.400" height="5.400" rx=".8" fill="#e0e0e0"/><rect x="4" y="5.800" width="1" height="2" fill="#555"/></svg>
<span class="t" style="left:1016px;top:282px;font-size:8.200px">填充:</span>
<div class="field" style="left:1037px;top:281px;width:29px;height:14px"></div>
<span class="t" style="left:1040px;top:282px;font-size:8px">100%</span>
<div class="field" style="left:1067px;top:281px;width:11px;height:14px"></div>
<svg class="abs" style="left:1069px;top:286px" width="7" height="5" viewBox="0 0 7 5"><path d="M1 1L3.500 3.600L6 1" stroke="#a8a8a8" stroke-width="1.100" fill="none"/></svg>
<!-- layer rows -->
<div class="abs" style="left:909px;top:299px;width:160px;height:201px;background:#4d4d4d"></div>
<div class="abs" style="left:930px;top:300px;width:139px;height:45px;background:#6a6a6a"></div>
<div class="abs" style="left:909px;top:345px;width:160px;height:1px;background:#434343"></div>
<div class="abs" style="left:909px;top:363px;width:160px;height:1px;background:#434343"></div>
<div class="abs" style="left:909px;top:408px;width:160px;height:1px;background:#434343"></div>
<div class="abs" style="left:909px;top:454px;width:160px;height:1px;background:#434343"></div>
<div class="abs" style="left:929px;top:300px;width:1px;height:200px;background:#454545"></div>
<!-- layer 1 -->
<svg class="abs" style="left:913px;top:319px" width="11" height="8" viewBox="0 0 11 8"><path d="M.4 4C2 1.200 3.800 .4 5.500 .4C7.200 .4 9 1.200 10.600 4C9 6.800 7.200 7.600 5.500 7.600C3.800 7.600 2 6.800 .4 4Z" fill="#e6e6e6"/><circle cx="5.500" cy="4" r="2" fill="#4a4a4a"/><circle cx="5.500" cy="4" r=".9" fill="#e6e6e6"/></svg>
<div class="abs" style="left:930px;top:301px;width:43px;height:43px;background:
linear-gradient(#e9e9e9,#e9e9e9) 2px 2px/39px 39px no-repeat,
linear-gradient(#3a3a3a,#3a3a3a) 1px 1px/41px 41px no-repeat,
linear-gradient(#f4f4f4,#f4f4f4) 0 0/13px 13px no-repeat,linear-gradient(#f4f4f4,#f4f4f4) 100% 0/13px 13px no-repeat,linear-gradient(#f4f4f4,#f4f4f4) 0 100%/13px 13px no-repeat,linear-gradient(#f4f4f4,#f4f4f4) 100% 100%/13px 13px no-repeat,#6a6a6a"></div>
<span class="t" style="left:977px;top:317.500px;font-size:8.400px;color:#f2f2f2">图层 1</span>
<!-- group 1 -->
<div class="abs" style="left:912px;top:347px;width:14px;height:14px;background:#4a4a4a;border:1px solid #424242"></div>
<svg class="abs" style="left:933px;top:350px" width="4" height="8" viewBox="0 0 4 8"><path d="M.8 .8L3.200 4L.8 7.200" stroke="#9c9c9c" stroke-width="1" fill="none"/></svg>
<svg class="abs" style="left:940px;top:349px" width="11" height="9" viewBox="0 0 11 9"><path d="M.4 .4H4L5 1.600H10.600V8.600H.4Z" fill="#e6e6e6"/></svg>
<span class="t" style="left:959px;top:349px;font-size:8.400px">组 1</span>
<!-- paper layer -->
<svg class="abs" style="left:913px;top:382px" width="11" height="8" viewBox="0 0 11 8"><path d="M.4 4C2 1.200 3.800 .4 5.500 .4C7.200 .4 9 1.200 10.600 4C9 6.800 7.200 7.600 5.500 7.600C3.800 7.600 2 6.800 .4 4Z" fill="#e6e6e6"/><circle cx="5.500" cy="4" r="2" fill="#4a4a4a"/><circle cx="5.500" cy="4" r=".9" fill="#e6e6e6"/></svg>
<div class="abs" style="left:933px;top:373px;width:38px;height:27px;background:#f5e2c8;border-bottom:1px solid #3f3f3f"></div>
<div class="abs" style="left:962px;top:390px;width:9px;height:9px;background:#3c3c3c;border:1px solid #2a2a2a"><svg class="abs" style="left:0;top:0" width="7" height="7" viewBox="0 0 7 7"><path d="M1 .8H4.200L5.800 2.400V6.200H1Z" fill="#e8e8e8"/><rect x="3.200" y="3.600" width="3.200" height="2.800" fill="#3c3c3c" stroke="#e8e8e8" stroke-width=".6"/></svg></div>
<span class="t" style="left:979px;top:381.500px;font-size:8.400px">#常用纸3</span>
<svg class="abs" style="left:1049px;top:381px" width="9" height="10" viewBox="0 0 9 10"><path d="M2.300 4.400V3C2.300 .6 6.700 .6 6.700 3V4.400" fill="none" stroke="#e0e0e0" stroke-width="1.200"/><rect x=".8" y="4.200" width="7.400" height="5.400" rx=".8" fill="#e0e0e0"/><rect x="4" y="5.800" width="1" height="2" fill="#555"/></svg>
<!-- texture layer -->
<svg class="abs" style="left:913px;top:428px" width="11" height="8" viewBox="0 0 11 8"><path d="M.4 4C2 1.200 3.800 .4 5.500 .4C7.200 .4 9 1.200 10.600 4C9 6.800 7.200 7.600 5.500 7.600C3.800 7.600 2 6.800 .4 4Z" fill="#e6e6e6"/><circle cx="5.500" cy="4" r="2" fill="#4a4a4a"/><circle cx="5.500" cy="4" r=".9" fill="#e6e6e6"/></svg>
<div class="abs" style="left:933px;top:419px;width:38px;height:28px;background:#efefef;border-bottom:1px solid #3f3f3f"></div>
<div class="abs" style="left:962px;top:437px;width:9px;height:9px;background:#3c3c3c;border:1px solid #2a2a2a"><svg class="abs" style="left:0;top:0" width="7" height="7" viewBox="0 0 7 7"><path d="M1 .8H4.200L5.800 2.400V6.200H1Z" fill="#e8e8e8"/><rect x="3.200" y="3.600" width="3.200" height="2.800" fill="#3c3c3c" stroke="#e8e8e8" stroke-width=".6"/></svg></div>
<span class="t" style="left:979px;top:427.500px;font-size:8.400px">白色素描纸纹理</span>
<svg class="abs" style="left:1049px;top:427px" width="9" height="10" viewBox="0 0 9 10"><path d="M2.300 4.400V3C2.300 .6 6.700 .6 6.700 3V4.400" fill="none" stroke="#e0e0e0" stroke-width="1.200"/><rect x=".8" y="4.200" width="7.400" height="5.400" rx=".8" fill="#e0e0e0"/><rect x="4" y="5.800" width="1" height="2" fill="#555"/></svg>
<!-- background -->
<svg class="abs" style="left:913px;top:473px" width="11" height="8" viewBox="0 0 11 8"><path d="M.4 4C2 1.200 3.800 .4 5.500 .4C7.200 .4 9 1.200 10.600 4C9 6.800 7.200 7.600 5.500 7.600C3.800 7.600 2 6.800 .4 4Z" fill="#e6e6e6"/><circle cx="5.500" cy="4" r="2" fill="#4a4a4a"/><circle cx="5.500" cy="4" r=".9" fill="#e6e6e6"/></svg>
<div class="abs" style="left:933px;top:464px;width:38px;height:28px;background:#fdfdfd"></div>
<span class="t" style="left:979px;top:472px;font-size:8.400px">背景</span>
<svg class="abs" style="left:1049px;top:473px" width="9" height="10" viewBox="0 0 9 10" fill="none"><path d="M2.300 4.400V3C2.300 .6 6.700 .6 6.700 3V4.400" stroke="#d0d0d0" stroke-width="1.100"/><rect x="1" y="4.400" width="7" height="5" rx=".8" stroke="#d0d0d0" stroke-width="1.100"/></svg>
<!-- bottom icons -->
<div class="abs" style="left:909px;top:547px;width:171px;height:1px;background:#474747"></div>
<svg class="abs" style="left:936px;top:553px" width="12" height="7" viewBox="0 0 12 7" fill="none" stroke="#8e8e8e" stroke-width="1.100"><rect x=".6" y="1.200" width="6" height="4.600" rx="2.300"/><rect x="5.400" y="1.200" width="6" height="4.600" rx="2.300"/></svg>
<span class="t" style="left:956px;top:550px;font-size:10px;font-style:italic;font-family:'Liberation Serif',serif;color:#e2e2e2;height:13px">fx</span>
<div class="tri" style="left:965px;top:559px"></div>
<svg class="abs" style="left:975px;top:552px" width="11" height="9" viewBox="0 0 11 9"><rect x=".4" y=".4" width="10.200" height="8.200" fill="#e4e4e4"/><circle cx="5.500" cy="4.500" r="2.400" fill="#454545"/></svg>
<svg class="abs" style="left:994px;top:552px" width="10" height="10" viewBox="0 0 10 10"><circle cx="5" cy="5" r="4.200" fill="none" stroke="#e4e4e4" stroke-width="1.100"/><path d="M2 8A4.200 4.200 0 0 1 8 2Z" fill="#e4e4e4"/></svg>
<div class="tri" style="left:1003px;top:559px"></div>
<svg class="abs" style="left:1012px;top:553px" width="11" height="9" viewBox="0 0 11 9"><path d="M.4 .4H4L5 1.600H10.600V8.600H.4Z" fill="#e4e4e4"/></svg>
<svg class="abs" style="left:1031px;top:552px" width="10" height="10" viewBox="0 0 10 10" fill="none" stroke="#e4e4e4"><rect x=".7" y=".7" width="8.600" height="8.600" stroke-width="1.200"/><path d="M5 2.800V7.200M2.800 5H7.200" stroke-width="1.100"/></svg>
<svg class="abs" style="left:1051px;top:551px" width="9" height="11" viewBox="0 0 9 11"><path d="M.4 1.800H8.600V3H.4ZM3 .4H6V1.800H3ZM1.200 3.600H7.800L7.200 10.600H1.800Z" fill="#d0d0d0"/><path d="M3.200 4.600V9.600M4.500 4.600V9.600M5.800 4.600V9.600" stroke="#535353" stroke-width=".6"/></svg>
</body>
</html>
